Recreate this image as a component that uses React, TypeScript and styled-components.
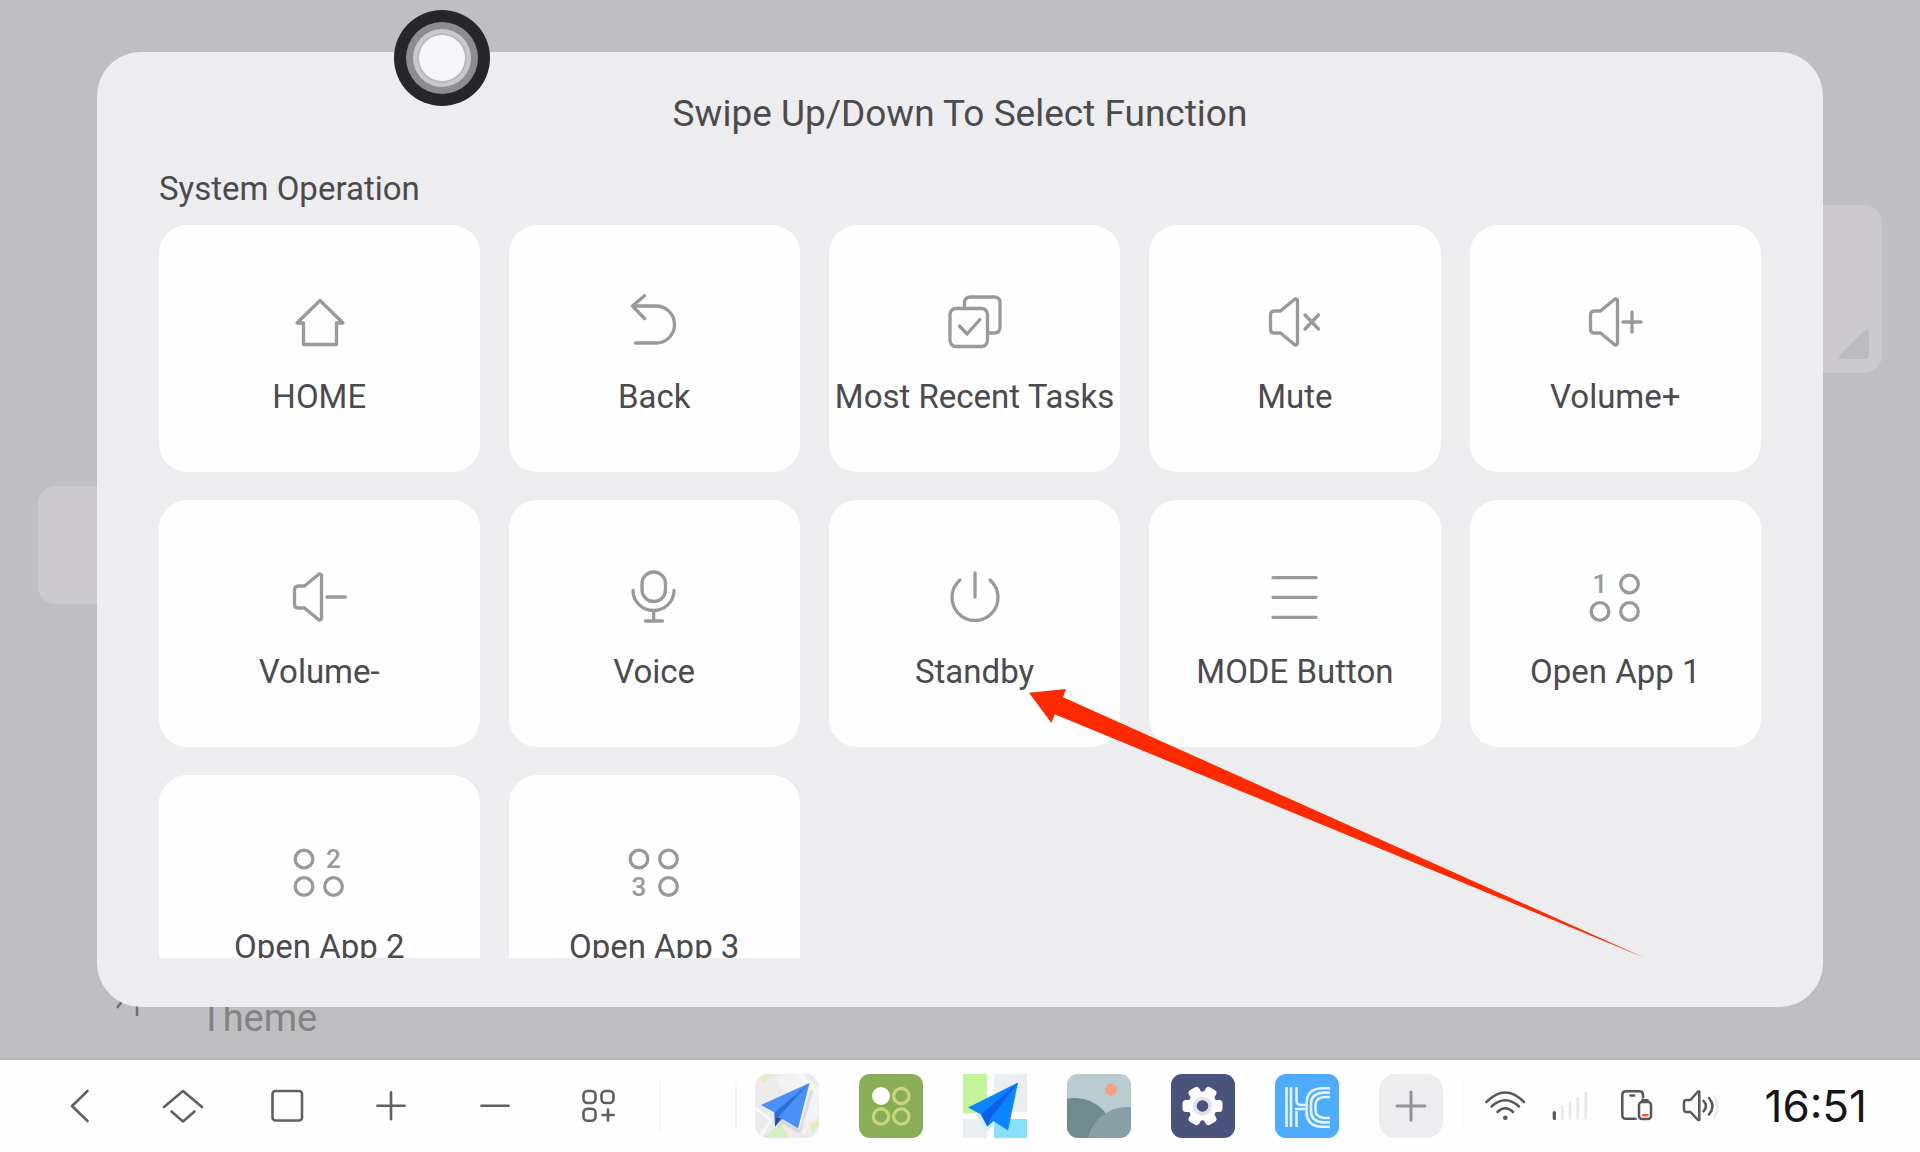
import React from "react";
import styled, { createGlobalStyle } from "styled-components";

const GlobalStyle = createGlobalStyle`
  *, *::before, *::after { box-sizing: border-box; }
  body {
    margin: 0;
    background: #fefdff;
    font-family: Roboto, "Noto Sans", sans-serif;
    color: #4b4b4d;
  }
  button {
    border: 0;
    padding: 0;
    background: none;
    font: inherit;
    color: inherit;
    cursor: pointer;
  }
  svg { display: block; }
`;

const Screen = styled.div`
  height: 100vh;
  display: flex;
  flex-direction: column;
  overflow: hidden;
`;

const Stage = styled.main`
  position: relative;
  flex: 1;
  min-height: 0;
  background: #bfbfc1;
  border-bottom: 2px solid #b7b7b9;
`;

/* Launcher page that sits dimmed behind the dialog */
const Launcher = styled.div`
  height: 100%;
  display: flex;
  flex-direction: column;
  padding: 205px 38px 18px;
`;

const Widget = styled.div<{ $height: number; $side: "start" | "end"; $gap?: number }>`
  display: flex;
  justify-content: flex-end;
  align-items: flex-end;
  align-self: flex-${(p) => p.$side};
  width: 48%;
  height: ${(p) => p.$height}px;
  margin-top: ${(p) => p.$gap ?? 0}px;
  padding: 14px 12px;
  border-radius: 18px;
  background: #cccacc;
`;

const ThemeRow = styled.div`
  display: flex;
  align-items: flex-end;
  gap: 32px;
  margin-top: auto;
  padding-left: 68px;
  font-size: 38px;
  line-height: 44px;
  color: #838385;
`;

const ThemeIcon = styled.svg`
  width: 62px;
  height: 62px;
  margin-bottom: 24px;
`;

const Overlay = styled.div`
  position: absolute;
  inset: 0;
  display: flex;
  padding: 52px 97px 51px;
`;

const Dialog = styled.section`
  flex: 1;
  min-width: 0;
  display: flex;
  flex-direction: column;
  padding: 40px 62px 49px;
  border-radius: 44px;
  background: #ededef;
`;

const Title = styled.h1`
  margin: 0;
  text-align: center;
  font-size: 37px;
  line-height: 44px;
  font-weight: 400;
`;

const SectionTitle = styled.h2`
  margin: 33px 0 16px;
  font-size: 33px;
  line-height: 40px;
  font-weight: 400;
`;

const Grid = styled.ul`
  flex: 1;
  min-height: 0;
  overflow-y: auto;
  scrollbar-width: none;
  display: grid;
  grid-template-columns: minmax(0, 11fr) repeat(4, minmax(0, 10fr));
  grid-auto-rows: max-content;
  gap: 28px 29px;
  margin: 0;
  padding: 0;
  list-style: none;
`;

const Card = styled.button`
  width: 100%;
  display: flex;
  flex-direction: column;
  align-items: center;
  gap: 27px;
  padding: 69px 0 55px;
  border-radius: 28px;
  background: #fefdff;
  font-size: 33px;
  line-height: 40px;
  white-space: nowrap;
`;

const CardIcon = styled.svg`
  width: 56px;
  height: 56px;
  fill: none;
  stroke: #99999b;
  stroke-width: 3.3;
  stroke-linecap: round;
  stroke-linejoin: round;
`;

const IconDigit = styled.text`
  font-family: Roboto, sans-serif;
  font-size: 26px;
  font-weight: 500;
  text-anchor: middle;
  fill: #99999b;
  stroke: none;
`;

const FloatingBall = styled.button`
  position: absolute;
  left: 419px;
  top: 35px;
  width: 46px;
  height: 46px;
  border-radius: 50%;
  background: #f6f6f8;
  box-shadow: 0 0 0 2px #b9b9bb, 0 0 0 6px #c9c9cb, 0 0 0 13px #8d8d8f,
    0 0 0 25px #28262a;
`;

const Pointer = styled.svg`
  position: absolute;
  left: 1029px;
  top: 689px;
  width: 616px;
  height: 270px;
  pointer-events: none;
`;

const Dock = styled.footer`
  display: flex;
  align-items: center;
  height: 92px;
  padding-left: 27px;
  background: #fefdff;
`;

const Nav = styled.nav`
  display: flex;
`;

const NavButton = styled.button`
  width: 104px;
  height: 92px;
  display: flex;
  align-items: center;
  justify-content: center;
`;

const NavIcon = styled.svg`
  width: 48px;
  height: 48px;
  fill: none;
  stroke: #606062;
  stroke-width: 2.6;
  stroke-linecap: round;
  stroke-linejoin: round;
`;

const RecentSlot = styled.div`
  width: 78px;
  height: 50px;
  margin-left: 8px;
  border: solid #f5f4f7;
  border-width: 0 2px;
`;

const Apps = styled.div`
  display: flex;
  gap: 40px;
  margin-left: 18px;
`;

const AppButton = styled.button<{ $radius?: number }>`
  width: 64px;
  height: 64px;
  border-radius: ${(p) => p.$radius ?? 11}px;
  overflow: hidden;
`;

const AppArt = styled.svg`
  width: 64px;
  height: 64px;
`;

const Status = styled.div`
  flex: 1;
  display: flex;
  align-items: center;
  gap: 25px;
  height: 50px;
  margin-left: 20px;
  padding: 0 53px 0 21px;
  border-left: 1px solid #f6f5f8;
`;

const StatusIcon = styled.svg`
  width: 40px;
  height: 40px;
  fill: none;
  stroke: #58585a;
  stroke-width: 2.5;
  stroke-linecap: round;
  stroke-linejoin: round;
`;

const Clock = styled.time`
  margin-left: auto;
  font-family: Inter, sans-serif;
  font-size: 44px;
  line-height: 48px;
  font-weight: 400;
  color: #161618;
`;

const speaker = "M28 5 L13.5 17 H7 Q3.5 17 3.5 21 V35 Q3.5 39 7 39 H13.5 L28 51 Q30.5 51 30.5 49 V7 Q30.5 5 28 5 Z";

const dots = [
  [13, 15],
  [42.5, 15],
  [13, 42.5],
  [42.5, 42.5],
];

/* Four-dot launcher glyph with one dot replaced by the slot number */
function AppSlot({ digit, at }: { digit: number; at: number }) {
  return (
    <>
      {dots.map(([x, y], i) =>
        i === at ? (
          <IconDigit key={i} x={x} y={y + 9}>
            {digit}
          </IconDigit>
        ) : (
          <circle key={i} cx={x} cy={y} r="8.8" />
        )
      )}
    </>
  );
}

const functions: { label: string; icon: React.ReactNode }[] = [
  { label: "HOME", icon: <path d="M29 6.5 L6 29 H12.5 V50.5 H45.5 V29 H52 Z" /> },
  { label: "Back", icon: <path d="M18.5 1.7 L6.5 12 L18.5 24.5 M6.5 12 H30 A18.5 18.5 0 0 1 30 49 H9.5" /> },
  {
    label: "Most Recent Tasks",
    icon: (
      <>
        <rect x="3" y="14.5" width="37.5" height="38" rx="6" />
        <path d="M17.5 14 V9 Q17.5 3 23.5 3 H47 Q53 3 53 9 V33 Q53 39 47 39 H41" />
        <path d="M12.5 32 L20 40 L33 25.5" />
      </>
    ),
  },
  { label: "Mute", icon: <><path d={speaker} /><path d="M38 21 L51.5 35 M51.5 21 L38 35" /></> },
  { label: "Volume+", icon: <><path d={speaker} /><path d="M36 28 H54 M45 18 V38" /></> },
  { label: "Volume-", icon: <><path d={speaker} /><path d="M36 28 H54.3" /></> },
  {
    label: "Voice",
    icon: (
      <>
        <rect x="16" y="3" width="23.5" height="29.5" rx="11.7" />
        <path d="M7 21.5 A20.5 20 0 0 0 48 21.5 M27.7 41.5 V52 M19.5 52 H36.5" />
      </>
    ),
  },
  { label: "Standby", icon: <path d="M13 11 A23 23 0 1 0 43 11 M28 4 V28" /> },
  { label: "MODE Button", icon: <path d="M6 8.7 H49 M6 28.3 H49 M6 48.3 H49" /> },
  { label: "Open App 1", icon: <AppSlot digit={1} at={0} /> },
  { label: "Open App 2", icon: <AppSlot digit={2} at={1} /> },
  { label: "Open App 3", icon: <AppSlot digit={3} at={2} /> },
];

const navItems: { label: string; icon: React.ReactNode }[] = [
  { label: "Back", icon: <path d="M32.5 9 L17 24 L32.5 39" /> },
  { label: "Home", icon: <path d="M5 25 L24 9 L43 25 M12.5 29.5 L24 39.5 L35.5 29.5" /> },
  { label: "Recent", icon: <rect x="9.5" y="9" width="29.5" height="29.5" rx="3" /> },
  { label: "Volume up", icon: <path d="M10.5 23.7 H37.5 M24 10.3 V37.3" /> },
  { label: "Volume down", icon: <path d="M10.5 23.7 H37.5" /> },
  {
    label: "All apps",
    icon: (
      <>
        <rect x="8.5" y="9" width="12" height="12" rx="4" />
        <rect x="26.5" y="9" width="12" height="12" rx="4" />
        <rect x="8.5" y="26.8" width="12" height="12" rx="4" />
        <path d="M27.5 33 H38.7 M33 27.5 V38.5" />
      </>
    ),
  },
];

const apps: { label: string; radius?: number; art: React.ReactNode }[] = [
  {
    label: "Navigation",
    radius: 13,
    art: (
      <>
        <rect width="64" height="64" fill="#ebebed" />
        <path d="M21 2 L48 0 L64 14 V30 L44 28 L24 12 Z M30 42 L50 60 L64 40 V30 L40 30 Z" fill="#f2f1f3" />
        <path d="M0 34 L16 46 L6 62 M44 0 L64 20" stroke="#f7f6f8" strokeWidth="3" fill="none" />
        <path d="M4 0 H22 L8 9 Z" fill="#dcefc8" />
        <path d="M7 64 L25 50 L38 64 Z M54 52 L64 45 V52 L58 59 Z" fill="#d6efc2" />
        <path d="M3 3 L17 30 L36 64 M36 60 L64 45" stroke="#fae8da" strokeWidth="3" fill="none" />
        <path d="M22 54 L28 46 L44 56 L56 14 L58 18 L46 58 L42 59 L29 50 Z" fill="#c9cdd3" opacity=".6" />
        <path d="M54.5 9 L6 31 L19.5 38.5 L20 52.5 L27.5 45 L43 54.5 Z" fill="#4a90fb" />
        <path d="M54.5 9 L19.5 38.5 L20 52.5 L24 42 Z" fill="#2d70cf" />
        <path d="M21 44 L26 44 L20 52.5 Z" fill="#204b92" />
      </>
    ),
  },
  {
    label: "Launcher",
    art: (
      <>
        <rect width="64" height="64" fill="#8aae56" />
        <circle cx="22" cy="22" r="9" fill="#fefdff" />
        <g fill="none" stroke="#c9d77c" strokeWidth="3.2">
          <circle cx="42.3" cy="22" r="7.7" />
          <circle cx="22" cy="42.5" r="7.7" />
          <circle cx="42.3" cy="42.5" r="7.7" />
        </g>
      </>
    ),
  },
  {
    label: "Maps",
    radius: 0,
    art: (
      <>
        <rect width="24" height="39" fill="#c2f59a" />
        <rect x="31" width="33" height="38" fill="#ebeef1" />
        <rect y="45" width="24" height="19" fill="#ebeef1" />
        <rect x="31" y="45" width="33" height="19" fill="#86e0ff" />
        <path d="M12 40 L24 58 L32 50 L30 42 Z" fill="#d3eefb" />
        <path d="M55 8.5 L5 33.5 L18 40.5 L24.5 52.5 L30.5 47 L45 56.5 Z" fill="#0a84ff" />
        <path d="M55 8.5 L18 40.5 L24.5 52.5 L28 44 Z" fill="#0b5fec" />
      </>
    ),
  },
  {
    label: "Gallery",
    art: (
      <>
        <rect width="64" height="64" fill="#b8ccd2" />
        <circle cx="44" cy="15.5" r="6" fill="#f4a282" />
        <circle cx="8" cy="63" r="39" fill="#6f8c8d" />
        <circle cx="60" cy="73" r="40" fill="#879fa7" />
      </>
    ),
  },
  {
    label: "Settings",
    art: (
      <>
        <rect width="64" height="64" fill="#49537b" />
        <g fill="#fefdff">
          <circle cx="31.5" cy="32" r="14.5" />
          {[0, 60, 120].map((a) => (
            <rect key={a} x="11.5" y="26" width="40" height="12" rx="3.5" transform={`rotate(${a} 31.5 32)`} />
          ))}
        </g>
        <circle cx="31.5" cy="32" r="9.5" fill="#e0e2e6" />
        <circle cx="31.5" cy="32" r="5.8" fill="#49537b" />
      </>
    ),
  },
  {
    label: "HiCar",
    art: (
      <>
        <rect width="64" height="64" fill="#4dacff" />
        <g fill="none" stroke="#e4f3ff" strokeWidth="2.6">
          <path d="M11.5 13 V53 M16 13 V53" />
          <path d="M21.5 37 V53 M21.5 13 V26 Q21.5 31 26 31 H30 M20 35 H30" />
          <path d="M55 14.2 H46 Q31.5 15 31.5 30 V37 Q31.5 52 46 52.8 H55" />
          <path d="M55 18.6 H48 Q36 19.5 36 30 V37 Q36 47.5 48 48.4 H55" />
          <path d="M55 23 H49 Q40.5 24 40.5 31 V36 Q40.5 43 49 44 H55" />
        </g>
      </>
    ),
  },
  {
    label: "Add app",
    radius: 16,
    art: (
      <>
        <rect width="64" height="64" fill="#ededef" />
        <path d="M18 32 H46 M32 18 V46" stroke="#929294" strokeWidth="3" strokeLinecap="round" />
      </>
    ),
  },
];

export default function App() {
  return (
    <Screen>
      <GlobalStyle />
      <Stage>
        <Launcher>
          <Widget $height={168} $side="end">
            <svg width="32" height="30" viewBox="0 0 32 30">
              <path d="M26 2 Q31 -2 31 4 V25 Q31 30 27 30 H3 Q-1 30 2 26 Z" fill="#bdbcbe" />
            </svg>
          </Widget>
          <Widget $height={118} $side="start" $gap={113} />
          <ThemeRow>
            <ThemeIcon viewBox="0 0 62 62" fill="none" stroke="#6f6f71" strokeWidth="2.5">
              <circle cx="31" cy="31" r="15" />
              <path d="M31 52 V62 M17 46 L11 54 M45 46 L51 52 M31 0 V10 M0 31 H10 M52 31 H62" />
            </ThemeIcon>
            Theme
          </ThemeRow>
        </Launcher>

        <Overlay>
          <Dialog role="dialog" aria-labelledby="dialog-title">
            <Title id="dialog-title">Swipe Up/Down To Select Function</Title>
            <SectionTitle>System Operation</SectionTitle>
            <Grid>
              {functions.map((f) => (
                <li key={f.label}>
                  <Card type="button">
                    <CardIcon viewBox="0 0 56 56" aria-hidden="true">
                      {f.icon}
                    </CardIcon>
                    {f.label}
                  </Card>
                </li>
              ))}
            </Grid>
          </Dialog>
        </Overlay>

        <FloatingBall type="button" aria-label="Assistive ball" />
        <Pointer viewBox="0 0 616 270" aria-hidden="true">
          <path d="M0 3.7 L37 0 L34 8.3 L615.5 268.7 L25.7 25.3 L22.4 34 Z" fill="#ff2a00" />
        </Pointer>
      </Stage>

      <Dock>
        <Nav>
          {navItems.map((n) => (
            <NavButton key={n.label} type="button" aria-label={n.label}>
              <NavIcon viewBox="0 0 48 48">{n.icon}</NavIcon>
            </NavButton>
          ))}
        </Nav>
        <RecentSlot />
        <Apps>
          {apps.map((a) => (
            <AppButton key={a.label} type="button" aria-label={a.label} $radius={a.radius}>
              <AppArt viewBox="0 0 64 64">{a.art}</AppArt>
            </AppButton>
          ))}
        </Apps>
        <Status>
          <StatusIcon viewBox="0 0 40 40">
            <path d="M1.5 16 Q20.3 -3 39 16 M6.5 20.5 Q20.3 8 34 20.5 M12.5 26 Q20.3 18.5 28 26" />
            <circle cx="20.3" cy="31.7" r="2.3" fill="#58585a" stroke="none" />
          </StatusIcon>
          <StatusIcon viewBox="0 0 40 40">
            <path d="M4.3 26.5 V32.5" strokeWidth="3.2" />
            <path d="M12.3 21 V32.5 M20 17 V32.5 M27.7 12 V32.5 M35.7 7 V32.5" stroke="#e7e6e9" />
          </StatusIcon>
          <StatusIcon viewBox="0 0 40 40">
            <path d="M28 11.5 V9 Q28 5.3 24.3 5.3 H11 Q7.3 5.3 7.3 9 V29 Q7.3 32.8 11 32.8 H20.5 M15.5 9.5 H19" />
            <path d="M27.5 14.5 H32.5" strokeWidth="3" />
            <rect x="24" y="16" width="12" height="17" rx="3" />
            <path d="M28 29.3 H32.3" stroke="#ff5b3f" />
          </StatusIcon>
          <StatusIcon viewBox="0 0 40 40">
            <path d="M18 5.5 L10.5 14 H6.5 Q4 14 4 16.5 V23.5 Q4 26 6.5 26 H10.5 L18 34 H19.3 V5.5 Z" />
            <path d="M23.5 14.8 Q28.5 20 23.5 25.4 M29 12 Q36 20 29 28.5" />
            <path d="M34.5 10 Q41 20 34.5 31" stroke="#ebeaed" />
          </StatusIcon>
          <Clock dateTime="16:51">16:51</Clock>
        </Status>
      </Dock>
    </Screen>
  );
}
